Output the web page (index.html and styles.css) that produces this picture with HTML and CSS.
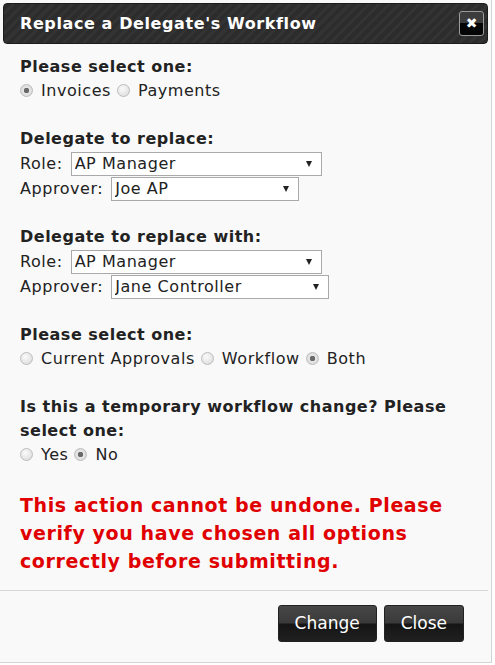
FILE: index.html
```html
<!DOCTYPE html>
<html lang="en">
<head>
	<meta charset="UTF-8">
	<title>Replace a Delegate's Workflow</title>
<link rel="stylesheet" href="styles.css">
</head>
<body>
	<div class="dialog">
		<div class="titlebar">
			<span class="title">Replace a Delegate's Workflow</span>
			<a href="javascript:;" class="close">&#x2716;</a>
		</div>

		<div class="content">
			<div class="group">
				<div class="label">Please select one:</div>
				<div class="row">
					<label><input type="radio" name="type" checked> Invoices</label>
					<label><input type="radio" name="type"> Payments</label>
				</div>
			</div>

			<div class="group">
				<div class="label">Delegate to replace:</div>
				<div class="row pick">Role:
					<span class="select role"><select><option>AP Manager</option></select></span>
				</div>
				<div class="row pick">Approver:
					<span class="select appr1"><select><option>Joe AP</option></select></span>
				</div>
			</div>

			<div class="group">
				<div class="label">Delegate to replace with:</div>
				<div class="row pick">Role:
					<span class="select role"><select><option>AP Manager</option></select></span>
				</div>
				<div class="row pick">Approver:
					<span class="select appr2"><select><option>Jane Controller</option></select></span>
				</div>
			</div>

			<div class="group">
				<div class="label">Please select one:</div>
				<div class="row">
					<label><input type="radio" name="scope"> Current Approvals</label>
					<label><input type="radio" name="scope"> Workflow</label>
					<label><input type="radio" name="scope" checked> Both</label>
				</div>
			</div>

			<div class="group">
				<div class="label">Is this a temporary workflow change? Please select one:</div>
				<div class="row">
					<label><input type="radio" name="temp"> Yes</label>
					<label><input type="radio" name="temp" checked> No</label>
				</div>
			</div>

			<p class="warning">This action cannot be undone. Please verify you have chosen all options correctly before submitting.</p>
		</div>

		<div class="footer">
			<a href="javascript:;" class="btn">Change</a>
			<a href="javascript:;" class="btn">Close</a>
		</div>
	</div>
</body>
</html>
```

FILE: styles.css
```css
*{margin: 0;padding: 0;box-sizing: border-box}
body{
	background: #fff;
	font: 16px/24px "DejaVu Sans", Verdana, sans-serif;
	letter-spacing: 0.55px;
	color: #222;
}
.dialog{
	width: 492px;
	height: 663px;
	background: #f9f9f9;
	border-right: 1px solid #d4d4d4;
	border-bottom: 1px solid #d4d4d4;
	padding: 3px 0 0 0;
	display: flex;
	flex-direction: column;
}
.titlebar{
	margin: 0 3px;
	height: 41px;
	border-radius: 4px;
	border: 1px solid #1c1c1c;
	background: repeating-linear-gradient(-45deg,#2c2c2c 0,#2c2c2c 4px,#333 4px,#333 7px);
	display: flex;
	align-items: center;
	justify-content: space-between;
	padding: 0 3px 0 16px;
}
.titlebar .title{
	color: #fff;
	font-weight: bold;
	font-size: 16px;
	letter-spacing: 0.6px;
}
.titlebar .close{
	display: block;
	width: 25px;
	height: 25px;
	border: 1px solid #9a9a9a;
	border-radius: 3px;
	background: linear-gradient(#3c3c3c 0,#3c3c3c 50%,#050505 50%,#050505 100%);
	color: #fff;
	text-decoration: none;
	text-align: center;
	letter-spacing: 0;
	font: bold 14px/23px "DejaVu Sans", sans-serif;
}
.content{
	flex: 1;
	padding: 11px 20px 0 20px;
}
.group{
	margin-bottom: 24px;
}
.label{
	font-weight: bold;
	letter-spacing: 0.5px;
}
.row{
	display: flex;
	align-items: center;
	gap: 6px;
	height: 24px;
}
.row.pick{
	height: 25px;
	gap: 8px;
}
.row label{
	display: flex;
	align-items: center;
	gap: 8px;
}
input[type=radio]{
	-webkit-appearance: none;
	appearance: none;
	width: 13px;
	height: 13px;
	border-radius: 50%;
	border: 1px solid #bcbcbc;
	background: radial-gradient(circle at 40% 35%,#fafafa,#d8d8d8);
	position: relative;
	top: -1px;
}
input[type=radio]:checked{
	background: radial-gradient(circle,#6a6a6a 0,#6a6a6a 2.5px,#e6e6e6 3px,#d4d4d4 100%);
}
.select{
	position: relative;
	display: inline-block;
	height: 24px;
}
.select select{
	-webkit-appearance: none;
	appearance: none;
	width: 100%;
	height: 24px;
	border: 1px solid #a9a9a9;
	background: #fff;
	font: 16px "DejaVu Sans", Verdana, sans-serif;
	letter-spacing: 0.55px;
	color: #222;
	padding: 0 3px;
}
.select::after{
	content: "";
	position: absolute;
	right: 10px;
	top: 9px;
	border-left: 3.5px solid transparent;
	border-right: 3.5px solid transparent;
	border-top: 6px solid #222;
}
.role{width: 251px}
.appr1{width: 188px}
.appr2{width: 218px}
.warning{
	color: #e00000;
	font-weight: bold;
	font-size: 19px;
	line-height: 28px;
	letter-spacing: 0.6px;
	margin-top: 6px;
}
.footer{
	border-top: 1px solid #d6d6d6;
	margin-right: 3px;
	height: 72px;
	display: flex;
	justify-content: flex-end;
	align-items: flex-start;
	gap: 7px;
	padding: 14px 24px 0 0;
}
.btn{
	display: block;
	height: 37px;
	padding: 0 16px;
	border-radius: 3px;
	border: 1px solid #222;
	background: linear-gradient(#474747 0,#3a3a3a 48%,#151515 52%,#202020 100%);
	color: #fff;
	text-decoration: none;
	letter-spacing: 0;
	font: 17px/35px "DejaVu Sans", Verdana, sans-serif;
}
```
